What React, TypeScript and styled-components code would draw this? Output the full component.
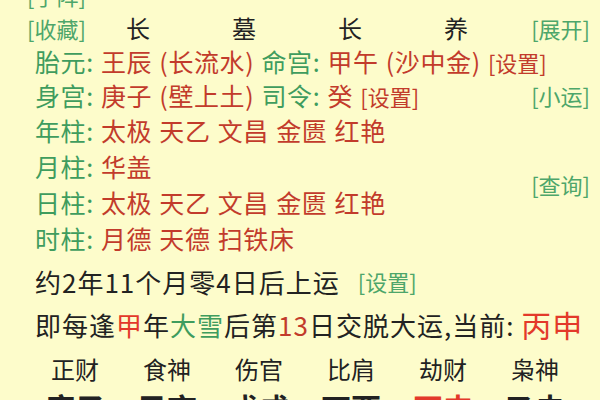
import React from 'react';
import styled, {createGlobalStyle} from 'styled-components';

const GREEN = '#3f9c5e';
const LINK_GREEN = '#4da66a';
const RED = '#c23b2b';
const BRIGHT_RED = '#e3392a';
const INK = '#222';

const GlobalStyle = createGlobalStyle`
  html, body {
    margin: 0;
    padding: 0;
    background: #fdfccb;
  }
  body {
    font-family: "Noto Sans CJK SC", "Noto Sans", sans-serif;
  }
`;

const Page = styled.div`
  width: 600px;
  height: 400px;
  overflow: hidden;
  box-sizing: border-box;
  padding: 0 10px 0 27px;
  background: #fdfccb;
  color: ${INK};
`;

const Sheet = styled.div`
  margin-top: -23px;
`;

const TopBlock = styled.div`
  display: grid;
  grid-template-columns: 1fr auto;
  grid-template-rows: 34px 33px 34px 34px 36px 36px 36px 36px;
  align-items: center;
`;

const Link = styled.span<{$color?: string; $gap?: number}>`
  font-size: 22px;
  line-height: 1;
  letter-spacing: 0;
  margin-left: ${p => p.$gap || 0}px;
  color: ${p => p.$color || LINK_GREEN};
  white-space: pre;
`;

const SideLink = styled(Link)<{$row: string}>`
  grid-column: 2;
  grid-row: ${p => p.$row};
  justify-self: end;
  align-self: center;
`;

const HeadRow = styled.div`
  grid-column: 1 / -1;
  grid-row: 2;
  display: grid;
  grid-template-columns: 58px repeat(4, 106px);
  align-items: center;
`;

const HeadCell = styled.span`
  font-size: 24px;
  text-align: center;
  color: ${INK};
`;

const InfoRow = styled.div<{$row: number; $flush?: boolean}>`
  grid-column: 1 / -1;
  grid-row: ${p => p.$row};
  padding-left: ${p => (p.$flush ? 0 : 8)}px;
  font-size: 25px;
  letter-spacing: 0.6px;
  word-spacing: 1px;
  white-space: pre;
  line-height: 1;
`;

const Label = styled.span`
  color: ${GREEN};
`;

const Value = styled.span`
  color: ${RED};
`;

const Sentence = styled.div<{$size: number; $height: number}>`
  padding-left: 8px;
  height: ${p => p.$height}px;
  display: flex;
  align-items: center;
  font-size: ${p => p.$size}px;
  letter-spacing: 1px;
  white-space: pre;
`;

const Mark = styled.span<{$color: string; $size?: number}>`
  color: ${p => p.$color};
  font-size: ${p => (p.$size ? `${p.$size}px` : 'inherit')};
`;

const Table = styled.div<{$size: number; $height: number; $bold?: boolean}>`
  display: grid;
  grid-template-columns: repeat(6, 92px);
  margin-left: 2px;
  height: ${p => p.$height}px;
  align-items: center;
  font-size: ${p => p.$size}px;
  font-weight: ${p => (p.$bold ? 700 : 400)};
  line-height: 1;
`;

const GodTable = styled(Table)`
  margin-top: 4px;
`;

const Cell = styled.span<{$red?: boolean}>`
  text-align: center;
  color: ${p => (p.$red ? BRIGHT_RED : INK)};
`;

const rows: {label: string; value: string}[] = [
  {label: '年柱', value: '太极 天乙 文昌 金匮 红艳'},
  {label: '月柱', value: '华盖'},
  {label: '日柱', value: '太极 天乙 文昌 金匮 红艳'},
  {label: '时柱', value: '月德 天德 扫铁床'},
];

const gods = ['正财', '食神', '伤官', '比肩', '劫财', '枭神'];
const pillars = ['庚子', '己亥', '戊戌', '丁酉', '丙申', '乙未'];

export default function App() {
  return (
    <Page>
      <GlobalStyle />
      <Sheet>
        <TopBlock>
          <InfoRow $row={1} $flush>
            <Link>[手阵]</Link>
          </InfoRow>
          <HeadRow>
            <Link>[收藏]</Link>
            <HeadCell>长</HeadCell>
            <HeadCell>墓</HeadCell>
            <HeadCell>长</HeadCell>
            <HeadCell>养</HeadCell>
          </HeadRow>
          <SideLink $row="2">[展开]</SideLink>

          <InfoRow $row={3}>
            <Label>胎元: </Label>
            <Value>王辰 (长流水) </Value>
            <Label>命宫: </Label>
            <Value>甲午 (沙中金) </Value>
            <Link $color={RED}>[设置]</Link>
          </InfoRow>
          <InfoRow $row={4}>
            <Label>身宫: </Label>
            <Value>庚子 (壁上土) </Value>
            <Label>司令: </Label>
            <Value>癸 </Value>
            <Link $color={RED}>[设置]</Link>
          </InfoRow>
          <SideLink $row="4">[小运]</SideLink>

          {rows.map((r, i) => (
            <InfoRow key={r.label} $row={5 + i}>
              <Label>{r.label}: </Label>
              <Value>{r.value}</Value>
            </InfoRow>
          ))}
          <SideLink $row="6 / 8">[查询]</SideLink>
        </TopBlock>

        <Sentence $size={26} $height={50}>
          约2年11个月零4日后上运
          <Link $gap={18}>[设置]</Link>
        </Sentence>
        <Sentence $size={26} $height={36}>
          即每逢<Mark $color={BRIGHT_RED}>甲</Mark>年<Mark $color={GREEN}>大雪</Mark>后第
          <Mark $color={RED}>13</Mark>日交脱大运,当前: <Mark $color={BRIGHT_RED} $size={30}>丙申</Mark>
        </Sentence>

        <GodTable $size={24} $height={46}>
          {gods.map(g => (
            <Cell key={g}>{g}</Cell>
          ))}
        </GodTable>
        <Table $size={30} $height={30} $bold>
          {pillars.map((p, i) => (
            <Cell key={p} $red={i === 4}>
              {p}
            </Cell>
          ))}
        </Table>
      </Sheet>
    </Page>
  );
}
